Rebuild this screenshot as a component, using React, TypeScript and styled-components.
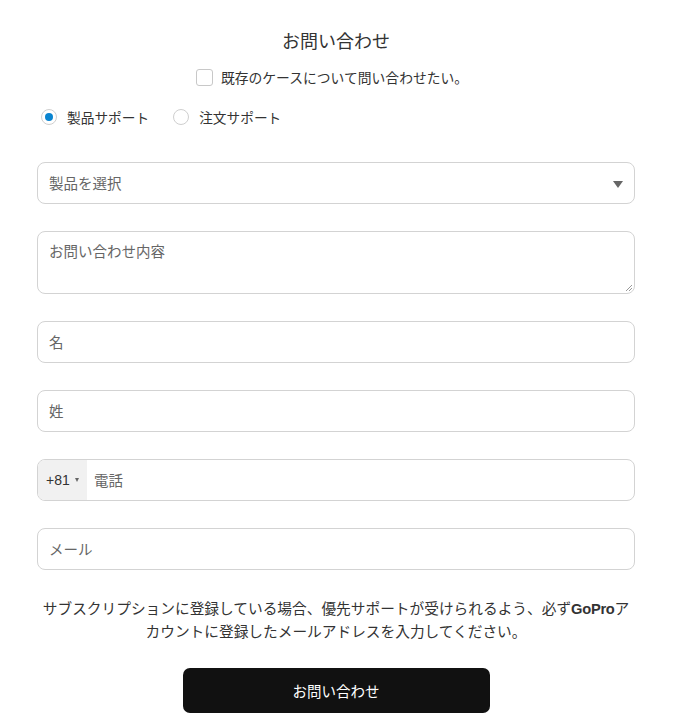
import React from "react";
import styled, { createGlobalStyle } from "styled-components";

const Global = createGlobalStyle`
  html, body { margin: 0; padding: 0; background: #fff; }
  body { font-family: "Noto Sans CJK JP", "Noto Sans", sans-serif; color: #333; }
  * { box-sizing: border-box; }
`;

const Page = styled.div`
  width: 598px;
  margin: 0 0 0 37px;
  padding-top: 27px;
  display: flex;
  flex-direction: column;
`;

const Title = styled.h1`
  margin: 0;
  font-size: 18px;
  font-weight: 400;
  line-height: 26px;
  text-align: center;
  color: #333;
`;

const CheckRow = styled.label`
  margin-top: 14px;
  align-self: center;
  display: flex;
  align-items: center;
  gap: 8px;
  font-size: 13.8px;
  line-height: 20px;
  color: #333;
  margin-left: -8px;
`;

const CheckBox = styled.span`
  width: 17px;
  height: 17px;
  border: 1px solid #c8c8c8;
  border-radius: 3px;
  background: #fff;
`;

const RadioGroup = styled.div`
  margin-top: 20px;
  display: flex;
  align-items: center;
  gap: 24px;
  padding-left: 4px;
`;

const RadioItem = styled.label`
  display: flex;
  align-items: center;
  gap: 10px;
  font-size: 13.7px;
  line-height: 20px;
  color: #333;
`;

const RadioCircle = styled.span<{ $checked?: boolean }>`
  width: 16px;
  height: 16px;
  border-radius: 50%;
  border: 1px solid #cfcfcf;
  background: #fff;
  display: flex;
  align-items: center;
  justify-content: center;
  &::after {
    content: "";
    width: 8px;
    height: 8px;
    border-radius: 50%;
    background: ${(p) => (p.$checked ? "#0a84d0" : "transparent")};
  }
`;

const Fields = styled.div`
  margin-top: 35px;
  display: flex;
  flex-direction: column;
  gap: 27px;
`;

const Field = styled.div<{ $h?: number; $top?: boolean }>`
  position: relative;
  height: ${(p) => p.$h ?? 42}px;
  border: 1px solid #d3d3d3;
  border-radius: 8px;
  background: #fff;
  display: flex;
  align-items: ${(p) => (p.$top ? "flex-start" : "center")};
  overflow: hidden;
`;

const Placeholder = styled.span<{ $top?: boolean }>`
  padding: ${(p) => (p.$top ? "9px 0 0 11px" : "0 0 0 11px")};
  font-size: 14.5px;
  color: #666;
  line-height: 20px;
  flex: 1;
`;

const Caret = styled.span`
  margin-right: 11px;
  width: 0;
  height: 0;
  border-left: 5px solid transparent;
  border-right: 5px solid transparent;
  border-top: 7px solid #666;
  margin-top: 3px;
`;

const Grip = styled.svg`
  position: absolute;
  right: 1px;
  bottom: 1px;
`;

const Prefix = styled.div`
  height: 100%;
  width: 49px;
  background: #f1f1f1;
  display: flex;
  align-items: center;
  padding-left: 8px;
  gap: 5px;
  font-size: 14px;
  color: #333;
  font-family: "Liberation Sans", "Noto Sans CJK JP", sans-serif;
`;

const SmallCaret = styled.span`
  width: 0;
  height: 0;
  border-left: 2.5px solid transparent;
  border-right: 2.5px solid transparent;
  border-top: 4px solid #666;
`;

const PhonePlaceholder = styled(Placeholder)`
  padding-left: 7px;
`;

const Note = styled.p`
  margin: 26px 0 0;
  font-size: 14.7px;
  line-height: 23px;
  text-align: center;
  color: #333;
`;

const Brand = styled.span`
  font-family: "Liberation Sans", sans-serif;
  font-weight: 700;
  letter-spacing: -0.3px;
  line-height: 1;
`;

const Submit = styled.button`
  margin: 26px auto 0;
  width: 307px;
  height: 45px;
  border: none;
  border-radius: 7px;
  background: #111;
  color: #fff;
  font-family: "Noto Sans CJK JP", sans-serif;
  font-size: 14.5px;
  cursor: pointer;
`;

export default function App() {
  return (
    <>
      <Global />
      <Page>
        <Title>お問い合わせ</Title>
        <CheckRow>
          <CheckBox />
          既存のケースについて問い合わせたい。
        </CheckRow>
        <RadioGroup>
          <RadioItem>
            <RadioCircle $checked />
            製品サポート
          </RadioItem>
          <RadioItem>
            <RadioCircle />
            注文サポート
          </RadioItem>
        </RadioGroup>
        <Fields>
          <Field>
            <Placeholder>製品を選択</Placeholder>
            <Caret />
          </Field>
          <Field $h={63} $top>
            <Placeholder $top>お問い合わせ内容</Placeholder>
            <Grip width="8" height="8" viewBox="0 0 8 8">
              <path d="M7 1 L1 7 M7 4 L4 7" stroke="#999" strokeWidth="1" />
            </Grip>
          </Field>
          <Field>
            <Placeholder>名</Placeholder>
          </Field>
          <Field>
            <Placeholder>姓</Placeholder>
          </Field>
          <Field>
            <Prefix>
              +81
              <SmallCaret />
            </Prefix>
            <PhonePlaceholder>電話</PhonePlaceholder>
          </Field>
          <Field>
            <Placeholder>メール</Placeholder>
          </Field>
        </Fields>
        <Note>
          サブスクリプションに登録している場合、優先サポートが受けられるよう、必ず<Brand>GoPro</Brand>ア
          <br />
          カウントに登録したメールアドレスを入力してください。
        </Note>
        <Submit>お問い合わせ</Submit>
      </Page>
    </>
  );
}
